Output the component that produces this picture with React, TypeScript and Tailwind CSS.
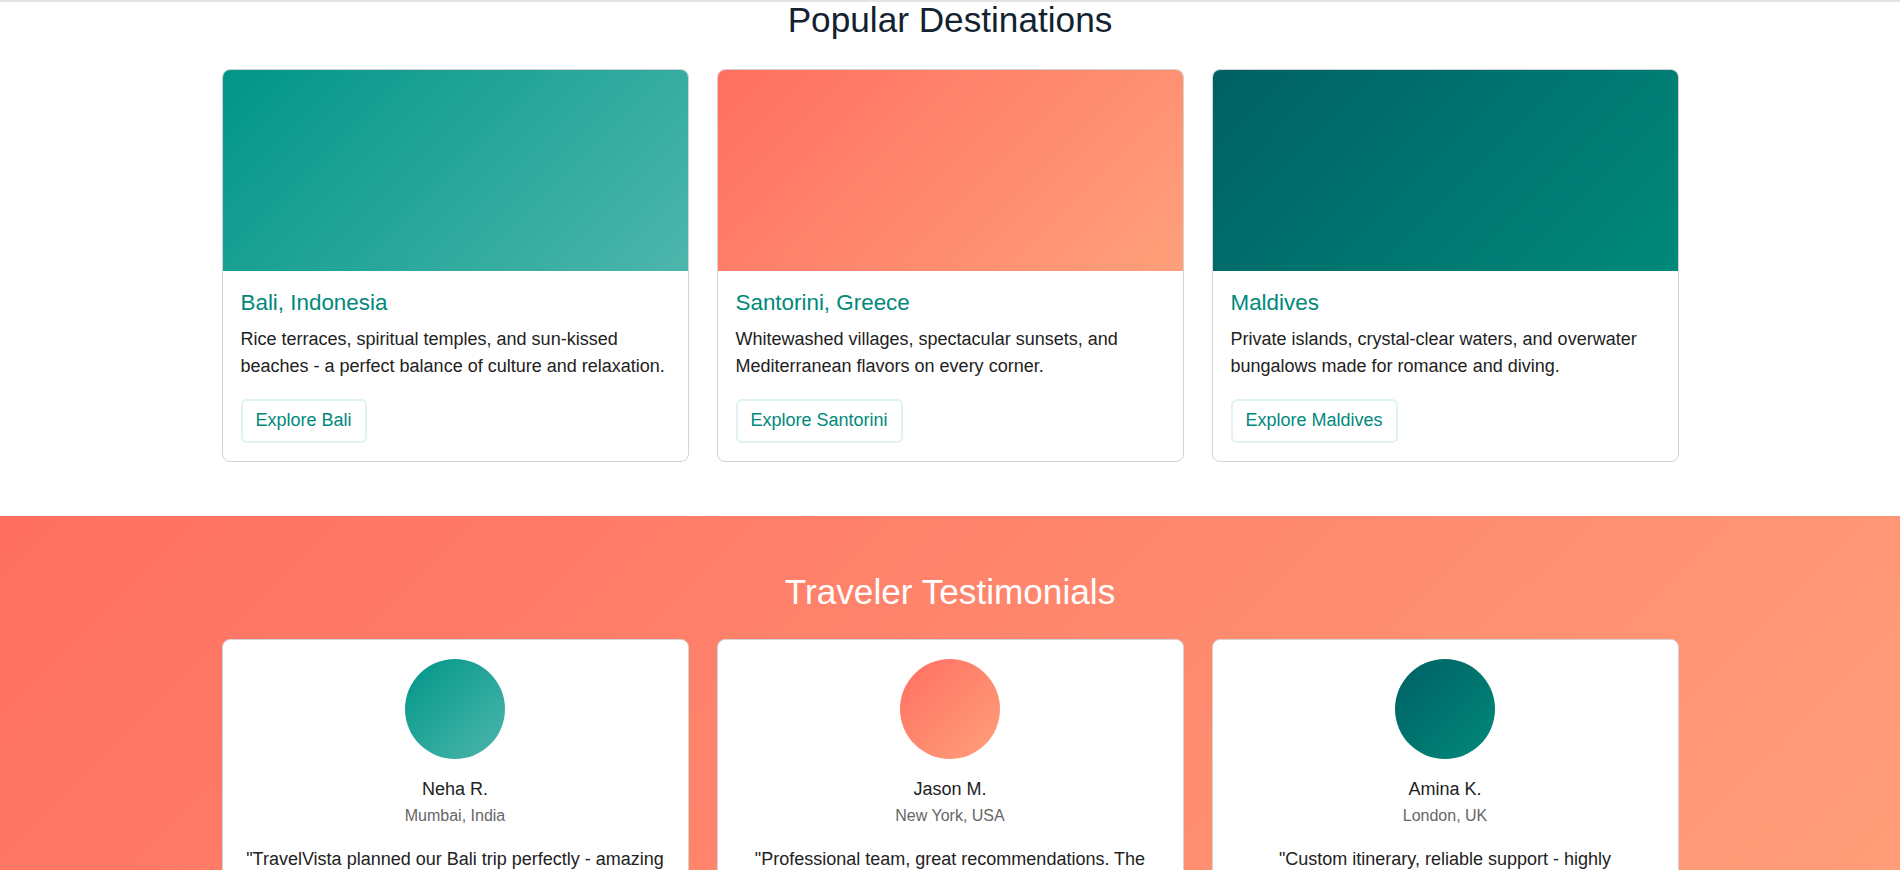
const destinations = [
  {
    name: "Bali, Indonesia",
    text: "Rice terraces, spiritual temples, and sun-kissed beaches - a perfect balance of culture and relaxation.",
    cta: "Explore Bali",
    bg: "bg-[linear-gradient(135deg,#009688,#4db6ac)]",
  },
  {
    name: "Santorini, Greece",
    text: "Whitewashed villages, spectacular sunsets, and Mediterranean flavors on every corner.",
    cta: "Explore Santorini",
    bg: "bg-[linear-gradient(135deg,#ff6f61,#ffa07a)]",
  },
  {
    name: "Maldives",
    text: "Private islands, crystal-clear waters, and overwater bungalows made for romance and diving.",
    cta: "Explore Maldives",
    bg: "bg-[linear-gradient(135deg,#006064,#00897b)]",
  },
];

const testimonials = [
  {
    name: "Neha R.",
    place: "Mumbai, India",
    quote: "\"TravelVista planned our Bali trip perfectly - amazing hotels and the guided tours were wonderful.\"",
    bg: "bg-[linear-gradient(135deg,#009688,#4db6ac)]",
  },
  {
    name: "Jason M.",
    place: "New York, USA",
    quote: "\"Professional team, great recommendations. The Santorini sunset cruise was unforgettable.\"",
    bg: "bg-[linear-gradient(135deg,#ff6f61,#ffa07a)]",
  },
  {
    name: "Amina K.",
    place: "London, UK",
    quote: "\"Custom itinerary, reliable support - highly recommended for anyone planning the Maldives.\"",
    bg: "bg-[linear-gradient(135deg,#006064,#00897b)]",
  },
];

export default function App() {
  return (
    <div className="h-[870px] overflow-hidden bg-white font-['Liberation_Sans',Arial,sans-serif] text-[#222]">
      <div className="h-[2px] bg-[#e4e4e4]" />

      {/* Destinations */}
      <section className="pb-[54px]">
        <h2 className="text-center text-[35.2px] leading-[36px] text-[#132231] mb-[31px]">
          Popular Destinations
        </h2>
        <div className="w-[1457px] mx-auto grid grid-cols-3 gap-[28px]">
          {destinations.map((d) => (
            <div
              key={d.name}
              className="bg-white border border-[#d3d3d3] rounded-lg overflow-hidden"
            >
              <div className={`h-[201px] ${d.bg}`} />
              <div className="px-[18px] pt-[15px] pb-[18px]">
                <h3 className="text-[22.4px] leading-[33.6px] text-[#00897b] mb-[6px]">
                  {d.name}
                </h3>
                <p className="text-[18px] leading-[27px] text-[#222] mb-[19px]">
                  {d.text}
                </p>
                <button className="h-[44px] px-[13px] rounded-md border-2 border-[#e0f2f1] text-[18px] text-[#00897b] bg-white">
                  {d.cta}
                </button>
              </div>
            </div>
          ))}
        </div>
      </section>

      {/* Testimonials */}
      <section className="bg-[linear-gradient(135deg,#ff6f61,#ffa07a)] pt-[55px] pb-16">
        <h2 className="text-center text-[35.2px] leading-[42px] text-white mb-[26px]">
          Traveler Testimonials
        </h2>
        <div className="w-[1457px] mx-auto grid grid-cols-3 gap-[28px]">
          {testimonials.map((t) => (
            <div
              key={t.name}
              className="bg-white border border-[#d3d3d3] rounded-lg px-5 pt-[19px] pb-6 flex flex-col items-center text-center"
            >
              <div className={`w-[100px] h-[100px] rounded-full mb-[17px] ${t.bg}`} />
              <div className="text-[18px] leading-[27px] text-[#222]">{t.name}</div>
              <div className="text-[16px] leading-[24px] text-[#666] mt-[1px]">{t.place}</div>
              <p className="text-[18px] leading-[27px] text-[#222] mt-[18px]">{t.quote}</p>
            </div>
          ))}
        </div>
      </section>
    </div>
  );
}
